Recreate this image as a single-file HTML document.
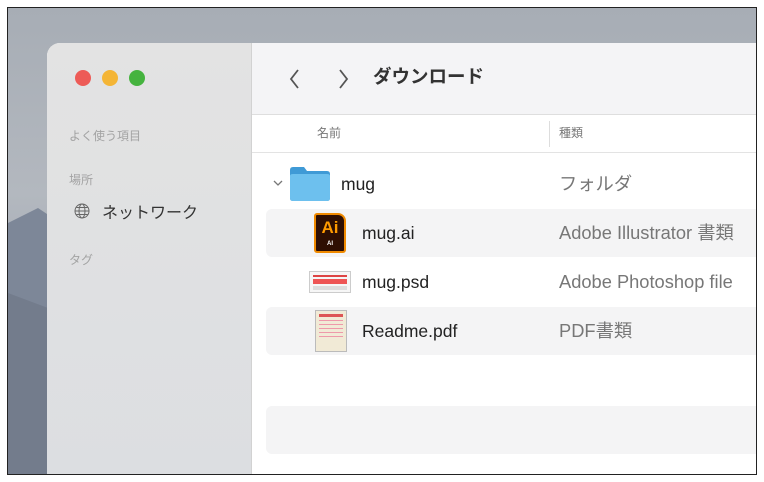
<!DOCTYPE html>
<html><head><meta charset="utf-8"><style>
*{margin:0;padding:0;box-sizing:border-box}
body{width:764px;height:482px;background:#fff;position:relative;overflow:hidden;font-family:"Liberation Sans","Noto Sans CJK JP",sans-serif}
.frame{position:absolute;left:7px;top:7px;width:750px;height:468px;border:1.5px solid #222;overflow:hidden;background:linear-gradient(180deg,#a7adb5 0%,#b3b8bf 40%,#8a93a2 100%)}
.mtn{position:absolute;left:0;top:0}
.win{position:absolute;left:39px;top:35px;width:720px;height:440px;border-radius:13px 0 0 0;overflow:hidden;background:#fff}
.side{position:absolute;left:0;top:0;width:205px;height:100%;background:linear-gradient(180deg,#e3e3e3,#dcdee1);border-right:1px solid #d2d2d2}
.dot{position:absolute;top:27px;width:16px;height:16px;border-radius:50%}
.sl{position:absolute;left:22px;font-size:12px;color:#a3a3a3}
.main{position:absolute;left:205px;top:0;right:0;height:100%}
.tb{position:absolute;left:0;right:0;top:0;height:72px;background:#f4f4f6;border-bottom:1px solid #dedede}
.hd{position:absolute;left:0;right:0;top:72px;height:38px;border-bottom:1px solid #e3e3e3;font-size:12px;color:#777}
.row{position:absolute;left:14px;right:0;height:48px;border-radius:6px 0 0 6px}
.sh{background:#f4f4f5}
.nm{position:absolute;left:96px;top:0;line-height:48px;font-size:17.5px;color:#222}
.kd{position:absolute;left:293px;top:0;line-height:48px;font-size:18.3px;color:#777}
</style></head><body>
<div class="frame">
<svg class="mtn" width="60" height="468"><path d="M0 215 L30 200 L45 210 L60 220 L60 468 L0 468Z" fill="#7d8798"/><path d="M0 285 L40 300 L60 305 L60 468 L0 468Z" fill="#737c8c"/></svg>
<div class="win">
<div class="side">
<div class="dot" style="left:28px;background:#ed5b57"></div>
<div class="dot" style="left:55px;background:#f4b536"></div>
<div class="dot" style="left:82px;background:#45b33f"></div>
<div class="sl" style="top:84px">よく使う項目</div>
<div class="sl" style="top:128px">場所</div>
<svg style="position:absolute;left:27px;top:160px" width="16" height="16" viewBox="0 0 16 16" fill="none" stroke="#666" stroke-width="1"><circle cx="8" cy="8" r="7"/><ellipse cx="8" cy="8" rx="3" ry="7"/><path d="M1 8h14M2.5 4.5h11M2.5 11.5h11"/></svg>
<div style="position:absolute;left:55px;top:156px;font-size:16px;color:#333">ネットワーク</div>
<div class="sl" style="top:208px">タグ</div>
</div>
<div class="main">
<div class="tb">
<svg style="position:absolute;left:36px;top:25px" width="14" height="22"><path d="M10 2 L3 11 L10 20" fill="none" stroke="#555" stroke-width="1.8"/></svg>
<svg style="position:absolute;left:84px;top:25px" width="14" height="22"><path d="M4 2 L11 11 L4 20" fill="none" stroke="#555" stroke-width="1.8"/></svg>
<div style="position:absolute;left:121px;top:20px;font-size:18.5px;color:#333;font-weight:bold">ダウンロード</div>
</div>
<div class="hd"><span style="position:absolute;left:65px;top:9px">名前</span><div style="position:absolute;left:297px;top:6px;width:1px;height:26px;background:#ddd"></div><span style="position:absolute;left:307px;top:9px">種類</span></div>
<div class="row" style="top:117px">
<svg style="position:absolute;left:7px;top:19px" width="10" height="8"><path d="M1 2 L5 6 L9 2" fill="none" stroke="#777" stroke-width="1.3"/></svg>
<svg style="position:absolute;left:23px;top:6px" width="42" height="36"><path d="M1 4 Q1 1 4 1 L15 1 L18 5 L38 5 Q41 5 41 8 L41 32 Q41 35 38 35 L4 35 Q1 35 1 32Z" fill="#3f9ad6"/><path d="M1 10 Q1 8 4 8 L38 8 Q41 8 41 10 L41 32 Q41 35 38 35 L4 35 Q1 35 1 32Z" fill="#6dc0ee"/></svg>
<div class="nm" style="left:75px">mug</div><div class="kd">フォルダ</div></div>
<div class="row sh" style="top:166px">
<div style="position:absolute;left:48px;top:4px;width:32px;height:40px;background:#2e0e02;border:2px solid #f08a00;border-radius:3px 8px 3px 3px;color:#ff9a00;font-weight:bold;font-size:17px;text-align:center;line-height:26px">Ai<div style="font-size:6px;color:#fff;line-height:6px">AI</div></div>
<div class="nm">mug.ai</div><div class="kd">Adobe Illustrator 書類</div></div>
<div class="row" style="top:215px">
<div style="position:absolute;left:43px;top:13px;width:42px;height:22px;background:#f6f6f6;border:1px solid #ccc"><div style="margin:3px 3px 0;height:2px;background:#d44"></div><div style="margin:2px 3px 0;height:5px;background:#e55"></div><div style="margin:2px 3px 0;height:4px;background:#ddd"></div></div>
<div class="nm">mug.psd</div><div class="kd">Adobe Photoshop file</div></div>
<div class="row sh" style="top:264px">
<div style="position:absolute;left:49px;top:3px;width:32px;height:42px;background:#f1ead6;border:1px solid #bbb"><div style="margin:3px;height:3px;background:#d55"></div><div style="margin:3px;height:20px;background:repeating-linear-gradient(#e9a 0 1px,transparent 1px 4px)"></div></div>
<div class="nm">Readme.pdf</div><div class="kd">PDF書類</div></div>
<div class="row sh" style="top:363px"></div>
</div>
</div>
</div>
</body></html>
